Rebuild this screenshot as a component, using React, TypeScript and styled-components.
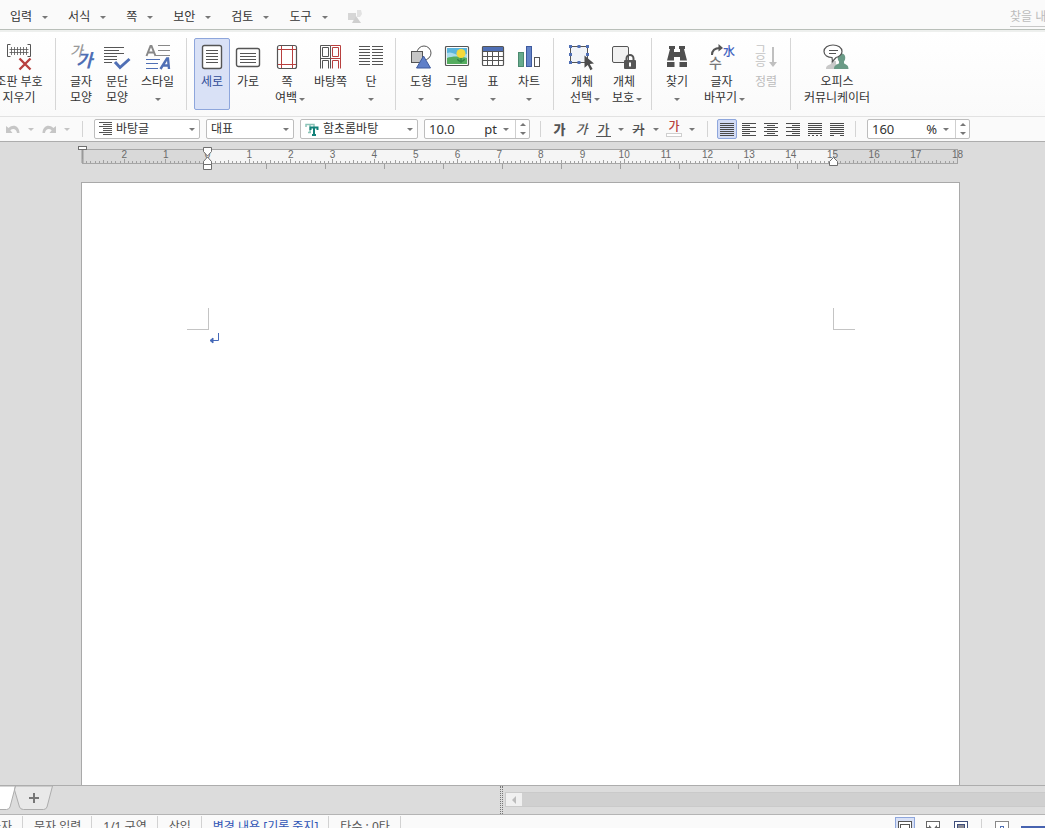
import React from 'react';
import styled, { createGlobalStyle, css } from 'styled-components';

const INK = '#555555';
const BLUE = '#4f6fb5';
const RED = '#b8403f';

const GlobalStyle = createGlobalStyle`
  *, *::before, *::after { box-sizing: border-box; }
  body {
    margin: 0;
    overflow: hidden;
    font-family: 'Noto Sans', 'Noto Sans CJK KR', sans-serif;
    font-size: 12px;
    line-height: 16px;
    color: #333;
  }
  button, input, select {
    margin: 0;
    padding: 0;
    border: 0;
    background: none;
    font: inherit;
    color: inherit;
    border-radius: 0;
  }
  svg { display: block; flex: none; overflow: visible; }
`;

const Shell = styled.div`
  display: flex;
  flex-direction: column;
  height: 100vh;
  overflow: hidden;
  background: #fafafa;
`;

/* ---------- menu bar ---------- */

const MenuBar = styled.nav`
  display: flex;
  align-items: center;
  gap: 20px;
  height: 30px;
  flex: none;
  padding: 5px 0 0 10px;
  border-bottom: 1px solid #b9bfb9;
`;

const MenuButton = styled.button`
  display: flex;
  align-items: center;
  gap: 10px;
  white-space: nowrap;
`;

const Caret = styled.span<{ $light?: boolean; $up?: boolean }>`
  width: 0;
  height: 0;
  flex: none;
  border: 3px solid transparent;
  ${p => (p.$up
    ? css`border-top: 0; border-bottom-color: #777;`
    : css`border-bottom: 0; border-top-color: ${p.$light ? '#c4c4c4' : '#777'};`)}
`;

const MenuSearch = styled.input`
  width: 35px;
  height: 20px;
  margin-left: auto;
  border-bottom: 1px solid #c8c8c8;
  &::placeholder { color: #bcbcbc; opacity: 1; }
`;

/* ---------- ribbon ---------- */

const Ribbon = styled.div`
  display: flex;
  flex: none;
  height: 87px;
  padding: 6px 0;
  margin-left: -18px;
  border-top: 2px solid #eef0ee;
  border-bottom: 1px solid #e2e2e2;
  background: linear-gradient(#ffffff, #fafafa);
`;

const RibbonGroup = styled.div`
  display: flex;
  flex: none;
  padding: 0 6px 0 7px;
  height: 72px;
  border-right: 1px solid #d6d6d6;
  &:last-child { border-right: 0; }
`;

const RibbonButton = styled.button<{ $width: number; $active?: boolean; $disabled?: boolean }>`
  display: flex;
  flex-direction: column;
  align-items: center;
  gap: 4px;
  flex: none;
  width: ${p => p.$width}px;
  padding-top: 5px;
  border: 1px solid ${p => (p.$active ? '#8ea6dc' : 'transparent')};
  border-radius: 2px;
  background: ${p => (p.$active ? '#d9e1f6' : 'transparent')};
  color: ${p => (p.$active ? '#2f4b96' : p.$disabled ? '#bdbdbd' : '#333')};
`;

const RibbonLabel = styled.span`
  display: flex;
  flex-direction: column;
  align-items: center;
  white-space: nowrap;
`;

const LabelRow = styled.span<{ $drop?: boolean }>`
  display: flex;
  align-items: center;
  height: 16px;
  gap: 2px;
  ${p => p.$drop && css`padding-left: 6px;`}
  ${Caret} { margin-top: 2px; }
`;

/* ---------- format bar ---------- */

const FormatBar = styled.div`
  display: flex;
  align-items: center;
  flex: none;
  gap: 6px;
  height: 25px;
  padding-left: 6px;
  background: #fafafa;
  border-bottom: 1px solid #adadad;
`;

const ToolSet = styled.div<{ $gap: number; $left: number; $right: number }>`
  display: flex;
  align-items: center;
  gap: ${p => p.$gap}px;
  padding: 0 ${p => p.$right}px 0 ${p => p.$left}px;
`;

const Rule = styled.span`
  width: 1px;
  height: 16px;
  flex: none;
  background: #d4d4d4;
`;

const Field = styled.label<{ $width: number }>`
  display: flex;
  align-items: center;
  flex: none;
  width: ${p => p.$width}px;
  height: 20px;
  padding: 0 4px;
  gap: 4px;
  border: 1px solid #bdbdbd;
  border-radius: 2px;
  background: #fff;
`;

const Select = styled.select`
  appearance: none;
  flex: 1;
  min-width: 0;
  height: 18px;
  outline: none;
`;

const NumberField = styled.div<{ $width: number }>`
  display: flex;
  align-items: center;
  flex: none;
  width: ${p => p.$width}px;
  height: 20px;
  padding-left: 4px;
  border: 1px solid #bdbdbd;
  border-radius: 2px;
  background: #fff;
  font-size: 13px;
`;

const NumberInput = styled.input`
  flex: 1;
  min-width: 0;
  width: 20px;
  height: 18px;
`;

const DropButton = styled.button`
  display: flex;
  align-items: center;
  justify-content: center;
  width: 18px;
  height: 18px;
`;

const Stepper = styled.span`
  display: flex;
  flex-direction: column;
  width: 14px;
  height: 18px;
  border-left: 1px solid #cfcfcf;
`;

const StepButton = styled.button`
  display: flex;
  flex: 1;
  align-items: center;
  justify-content: center;
`;

const CharButton = styled.button<{ $variant: 'bold' | 'italic' | 'underline' | 'strike' }>`
  width: 15px;
  height: 16px;
  color: ${INK};
  font-size: 13px;
  line-height: 14px;
  text-align: center;
  font-weight: 500;
  ${p => p.$variant === 'bold' && css`font-weight: 900;`}
  ${p => p.$variant === 'italic' && css`font-style: italic;`}
  ${p => p.$variant === 'underline' && css`border-bottom: 1px solid ${INK};`}
  ${p => p.$variant === 'strike' && css`text-decoration: line-through;`}
`;

const ColorButton = styled.button`
  display: flex;
  flex-direction: column;
  align-items: center;
  width: 16px;
  color: ${RED};
  font-size: 12px;
  line-height: 12px;
  font-weight: 500;
`;

const Swatch = styled.span`
  width: 16px;
  height: 4px;
  border: 1px solid #cfcfcf;
  background: #fff;
`;

const AlignButton = styled.button<{ $active?: boolean }>`
  display: flex;
  align-items: center;
  justify-content: center;
  width: 20px;
  height: 20px;
  border: 1px solid ${p => (p.$active ? '#8ea6dc' : 'transparent')};
  border-radius: 2px;
  background: ${p => (p.$active ? '#d3dcf5' : 'transparent')};
`;

const IconButton = styled.button`
  display: flex;
  align-items: center;
  justify-content: center;
`;

/* ---------- workspace ---------- */

const Workspace = styled.main`
  display: flex;
  flex-direction: column;
  flex: 1;
  min-height: 0;
  overflow: hidden;
  padding-left: 78px;
  background: #dcdcdc;
`;

const RulerRow = styled.div`
  flex: none;
  height: 40px;
`;

const Paper = styled.section`
  flex: 1;
  width: 879px;
  margin-left: 3px;
  padding: 125px 104px 0 105px;
  border: 1px solid #a9a9a9;
  border-bottom: 0;
  background: #fff;
`;

const MarginMarks = styled.div`
  display: flex;
  justify-content: space-between;
`;

const Mark = styled.span<{ $side: 'left' | 'right' }>`
  width: 22px;
  height: 22px;
  border-bottom: 1px solid #c4c4c4;
  ${p => (p.$side === 'left' ? 'border-right' : 'border-left')}: 1px solid #c4c4c4;
`;

const Paragraph = styled.p`
  margin: 0;
  padding: 3px 22px 0;
`;

/* ---------- bottom ---------- */

const TabStrip = styled.div`
  display: flex;
  align-items: flex-start;
  flex: none;
  height: 30px;
  border-top: 1px solid #adadad;
  border-bottom: 1px solid #b4b4b4;
  background: #dcdcdc;
`;

const TabArea = styled.div`
  flex: 0 0 500px;
  display: flex;
`;

const Splitter = styled.span`
  width: 3px;
  height: 28px;
  margin-right: 2px;
  flex: none;
  border-left: 1px dotted #777;
  border-right: 1px dotted #777;
`;

const ScrollTrack = styled.div`
  display: flex;
  flex: 1;
  height: 15px;
  margin-top: 6px;
  border: 1px solid #cacaca;
  border-right: 0;
  background: #d0d0d0;
`;

const ScrollButton = styled.button`
  display: flex;
  align-items: center;
  justify-content: center;
  width: 16px;
  height: 13px;
  background: #f0f0f0;
`;

const StatusBar = styled.footer`
  display: flex;
  align-items: flex-start;
  flex: none;
  height: 13px;
  overflow: hidden;
  background: #fafafa;
`;

const StatusItem = styled.span<{ $accent?: boolean }>`
  flex: none;
  margin-top: 1px;
  padding: 2px 10px 0 11px;
  line-height: 18px;
  border-right: 1px solid #d2d2d2;
  white-space: nowrap;
  color: ${p => (p.$accent ? '#2f55b5' : '#555')};
`;

const StatusEdge = styled(StatusItem)`
  display: flex;
  justify-content: flex-end;
  width: 23px;
  padding-left: 0;
`;

const ViewTools = styled.div`
  display: flex;
  align-items: flex-start;
  margin-left: auto;
  padding-top: 2px;
`;

const ViewButton = styled.button<{ $active?: boolean }>`
  display: flex;
  justify-content: center;
  width: 20px;
  height: 22px;
  margin-right: 8px;
  padding-top: 3px;
  border: 1px solid ${p => (p.$active ? '#8ea6dc' : 'transparent')};
  background: ${p => (p.$active ? '#d9e1f6' : 'transparent')};
`;

const ViewRule = styled.span`
  width: 1px;
  height: 18px;
  margin: 2px 10px 0 2px;
  background: #d2d2d2;
`;

const ZoomTrack = styled.span`
  width: 24px;
  height: 3px;
  margin: 9px 0 0 1px;
  background: #4763b0;
`;

/* ---------- icons ---------- */

const Icon = ({ children }: { children: React.ReactNode }) => (
  <svg width="26" height="26" viewBox="0 0 26 26" fill="none" stroke={INK} strokeWidth="1.2" aria-hidden="true">
    {children}
  </svg>
);

const glyphFont = { fontFamily: "'Noto Sans CJK KR', sans-serif" };
const rows = (ys: number[], x1: number, x2: number) => ys.map(y => `M${x1} ${y}H${x2}`).join('');

const icons: Record<string, React.ReactNode> = {
  clearMarks: (
    <Icon>
      <path d="M4.500 .5h-3v12h3M21.500 .5h3v12h-3" strokeWidth="1" />
      <path d="M3.500 5.500h19M3.500 8.500h19M5.500 3v8M8.500 3v8M11.500 3v8M14.500 3v8M17.500 3v8M20.500 3v8" strokeWidth=".8" />
      <path d="M13.500 14.500l11 11M24.500 14.500l-11 11" stroke={RED} strokeWidth="2.400" />
    </Icon>
  ),
  charShape: (
    <Icon>
      <text x="2" y="12" fontSize="14" fill="#999" stroke="none" fontStyle="italic" fontWeight="500" style={glyphFont}>가</text>
      <text x="8" y="23" fontSize="18" fill={BLUE} stroke="none" fontStyle="italic" fontWeight="700" style={glyphFont}>가</text>
    </Icon>
  ),
  paraShape: (
    <Icon>
      <path d="M0 3.500h20M0 6.500h15M0 9.500h20M0 12.500h13M0 15.500h13M0 18.500h8" strokeWidth="1" />
      <path d="M11 18l5 5.500L25.500 15" stroke={BLUE} strokeWidth="3" />
    </Icon>
  ),
  style: (
    <Icon>
      <path d="M1.500 12L5.500 2h1l4 10M3 8.500h6" stroke="#888" strokeWidth="2" />
      <path d="M13 1.500h12M13 6.500h12M11 11.500h14" stroke="#888" strokeWidth="1" />
      <path d="M1 15.500h14M1 19.500h12M1 24.500h12" stroke={BLUE} strokeWidth="1" />
      <path d="M15.500 25L22 14.500h1l1 10.500M18 21.500h6" stroke={BLUE} strokeWidth="2.400" />
    </Icon>
  ),
  portrait: (
    <Icon>
      <rect x="3.500" y="1.500" width="19" height="23" rx="2" fill="#fff" strokeWidth="1.400" />
      <path d={rows([6.5, 9.5, 12.5, 15.5, 18.5], 7, 19)} strokeWidth="1" />
    </Icon>
  ),
  landscape: (
    <Icon>
      <rect x="1.500" y="4.500" width="23" height="18" rx="2" fill="#fff" strokeWidth="1.400" />
      <path d={rows([9.5, 12.5, 15.5, 18.5], 5, 21)} strokeWidth="1" />
    </Icon>
  ),
  margins: (
    <Icon>
      <rect x="3.500" y="1.500" width="19" height="23" rx="2" fill="#fff" />
      <path d="M7.500 2v22M18.500 2v22M4 5.500h18M4 20.500h18" stroke={RED} strokeWidth="1" />
    </Icon>
  ),
  master: (
    <Icon>
      <path d="M2.500 24.500v-23h10v23M4.500 3.500h6v9h-6zM2.500 14.500h10M4.500 24.500v-8h6v8" strokeWidth="1" />
      <path d="M12.500 1.500h10v23M14.500 3.500h6v9h-6zM12.500 14.500h10M14.500 24.500v-8h6v8" stroke={RED} strokeWidth="1" />
    </Icon>
  ),
  columns: (
    <Icon>
      <path
        d={rows([2.5, 5.5, 8.5, 11.5, 14.5, 17.5, 20.5], 1, 12) + rows([2.5, 5.5, 8.5, 11.5, 14.5, 17.5, 20.5], 14, 25)}
        strokeWidth="1"
      />
    </Icon>
  ),
  shapes: (
    <Icon>
      <circle cx="16" cy="9" r="7" fill="#fff" strokeWidth="1" />
      <rect x="3.500" y="7.500" width="11" height="11" fill="#c6c6c6" strokeWidth="1" />
      <path d="M15.500 12l7 12h-14z" fill="#5f7fc8" stroke="#3e5a9e" strokeWidth="1" />
    </Icon>
  ),
  picture: (
    <Icon>
      <rect x="1.500" y="2.500" width="23" height="19" rx="1" fill="#fff" />
      <rect x="3" y="4" width="20" height="9" fill="#5ab4dc" stroke="none" />
      <path d="M3 9c5-2 8 2 12 2s6-1 8-1v6H3z" fill="#a8dcec" stroke="none" />
      <path d="M3 14c5-2 13-2 20 0v6H3z" fill="#55ad60" stroke="none" />
      <path d="M17 13v6M13.500 15c1 3 6 3 7 0" stroke="#2f8046" />
      <circle cx="17" cy="9.500" r="4.500" fill="#f5d93a" stroke="none" />
    </Icon>
  ),
  table: (
    <Icon>
      <rect x="2.500" y="2.500" width="21" height="19" rx="1" fill="#fff" />
      <rect x="3" y="3" width="20" height="4" fill={BLUE} stroke="none" />
      <path d="M2.500 7.500h21M2.500 12.500h21M2.500 16.500h21M7.500 7.500v14M12.500 7.500v14M18.500 7.500v14" strokeWidth="1" />
    </Icon>
  ),
  chart: (
    <Icon>
      <rect x="2.500" y="8.500" width="5" height="14" fill="#66ab8c" stroke="#4c8a70" strokeWidth="1" />
      <rect x="10.500" y="2.500" width="5" height="20" fill="#6484c8" stroke="#3e5a9e" strokeWidth="1" />
      <rect x="18.500" y="13.500" width="5" height="9" fill="#fff" strokeWidth="1" />
    </Icon>
  ),
  select: (
    <Icon>
      <rect x="1.500" y="2.500" width="17" height="16" fill="#f1f4f8" strokeWidth="1" />
      <path d="M0 1h3v3H0zM8.500 1h3v3h-3zM17 1h3v3h-3zM0 9h3v3H0zM17 9h3v3h-3zM0 17h3v3H0zM8.500 17h3v3h-3z" fill={BLUE} stroke="none" />
      <path d="M15.500 11.500l9.500 8-4.200.6 2.800 5-2.200 1.100-2.600-5.100-3.300 2.700z" fill="#4c4c4c" stroke="none" />
    </Icon>
  ),
  protect: (
    <Icon>
      <rect x="1.500" y="2.500" width="16" height="16" rx="1.500" fill="#f1f1f1" strokeWidth="1" />
      <path d="M15.500 17v-2.500a3.500 3.500 0 017 0V17" stroke="#555" strokeWidth="2" />
      <rect x="13" y="16" width="12" height="9" rx="1" fill="#555" stroke="none" />
      <path d="M19 18.500v4" stroke="#fff" strokeWidth="2" />
    </Icon>
  ),
  find: (
    <Icon>
      <path d="M5 2h6v3h-1v3h6V5h-1V2h6v3h-1l3 11.500h-7V13h-6v3.500H3L6 5H5z" fill="#4f4f4f" stroke="none" />
      <path d="M3 18h7.500v5H3zM15.500 18H23v5h-7.500z" fill="#4f4f4f" stroke="none" />
    </Icon>
  ),
  convert: (
    <Icon>
      <path d="M3 11c0-5 3-7 8-7" strokeWidth="2" />
      <path d="M9.500 0L14 4l-4.500 3.500z" fill={INK} stroke="none" />
      <text x="14" y="12" fontSize="12" fill="#4263c0" stroke="none" fontWeight="500" style={glyphFont}>水</text>
      <text x="0" y="24" fontSize="14" fill="#777" stroke="none" fontWeight="500" style={glyphFont}>수</text>
    </Icon>
  ),
  sort: (
    <Icon>
      <text x="2" y="11" fontSize="12" fill="#c4c4c4" stroke="none" style={glyphFont}>그</text>
      <text x="2" y="22" fontSize="12" fill="#c4c4c4" stroke="none" style={glyphFont}>응</text>
      <path d="M20 3v16" stroke="#c0c0c0" strokeWidth="2" />
      <path d="M16 18h8l-4 5z" fill="#c0c0c0" stroke="none" />
    </Icon>
  ),
  communicator: (
    <Icon>
      <path d="M2 25c0-4 3-4 5-5v-3h5v3c2 1 5 1 5 5z" fill="#c9c9c9" stroke="none" />
      <path d="M10 25c0-4 3-4.500 5-5.500v-2c-2-2-2-8 2.500-8s4.500 6 2.500 8v2c2 1 4.500 1.500 4.500 5.500z" fill="#6a9a86" stroke="none" />
      <path d="M9 1c5 0 9 2.500 9 6.500 0 3-3 5.500-6 6l-3.500 4-.5-4C4 13.500 0 11.500 0 7.500S4 1 9 1z" fill="#fff" />
      <path d="M5 6.500h9M5 9.500h7" strokeWidth="1" />
    </Icon>
  ),
};

type AlignKind = 'justify' | 'left' | 'center' | 'right' | 'distribute' | 'divide';
const alignPaths: Record<AlignKind, string> = {
  justify: rows([1.5, 3.5, 5.5, 7.5, 9.5, 11.5, 13.5], 0, 14),
  left: rows([1.5, 5.5, 9.5, 13.5], 0, 14) + rows([3.5, 7.5, 11.5], 0, 8),
  center: rows([1.5, 5.5, 9.5, 13.5], 0, 14) + rows([3.5, 7.5, 11.5], 3, 11),
  right: rows([1.5, 5.5, 9.5, 13.5], 0, 14) + rows([3.5, 7.5, 11.5], 6, 14),
  distribute: rows([1.5, 3.5, 5.5, 7.5, 9.5, 11.5], 0, 14) + 'M0 13.500h2M4 13.500h2M8 13.500h2M12 13.500h2',
  divide: rows([1.5, 3.5, 5.5, 7.5, 9.5, 11.5], 0, 14) + 'M0 13.500h4M10 13.500h4',
};

const AlignIcon = ({ kind }: { kind: AlignKind }) => (
  <svg width="14" height="15" viewBox="0 0 14 15" stroke="#4a4a4a" strokeWidth="1" aria-hidden="true">
    <path d={alignPaths[kind]} />
  </svg>
);

const UndoIcon = ({ flip }: { flip?: boolean }) => (
  <svg width="14" height="10" viewBox="0 0 14 10" aria-hidden="true">
    <path
      transform={flip ? 'matrix(-1 0 0 1 14 0)' : undefined}
      d="M0 2v7h6.500L4.300 6.300C7 3.800 10.500 5 11 9h2.500C13.500 2 7 -.5 2.600 4z"
      fill="#c6c6c6"
    />
  </svg>
);

const ParagraphStyleIcon = () => (
  <svg width="13" height="14" viewBox="0 0 13 14" stroke="#555" aria-hidden="true">
    <path d="M0 .5h13M4 2.500h9M0 4.500h13M4 6.500h9M4 8.500h9M0 10.500h13M4 12.500h9" />
  </svg>
);

const FontIcon = () => (
  <svg width="14" height="13" viewBox="0 0 14 13" fill="none" aria-hidden="true">
    <path d="M1 4V1.500h8V4M5 1.500v8M3 9.500h3" stroke="#8cc4b8" strokeWidth="1.500" />
    <path d="M5.500 7V4.500h7V7M9 4v8M7 12h4" stroke="#14827a" strokeWidth="2" />
  </svg>
);

/* ---------- ruler ---------- */

const CM = 125 / 3;
const ORIGIN = 129.5;

const Ruler = () => {
  const ticks: string[] = [];
  for (let i = -30; i <= 180; i++) {
    const x = Math.round(ORIGIN + (i * CM) / 10 - 0.5) + 0.5;
    const size = i % 10 === 0 ? 4 : i % 5 === 0 ? 3 : 2;
    ticks.push(`M${x} 21v-${size}`);
  }
  const stops: string[] = [];
  for (let i = 1; i <= 10; i++) {
    stops.push(`M${Math.round(ORIGIN + i * 58.9) + 0.5} 22v5`);
  }
  const numbers = [-2, -1, ...Array.from({ length: 19 }, (_, i) => i)];
  return (
    <svg width="890" height="32" viewBox="0 0 890 32" aria-label="눈금자">
      <rect x="4" y="7" width="876" height="15" fill="#d9d9d9" />
      <rect x="130" y="7" width="625" height="15" fill="#f5f5f5" />
      <path d="M4 7.500h876M4 21.500h876M879.500 7v15" stroke="#a6a6a6" />
      <path d="M4.500 7v14" stroke="#999" strokeWidth="2" />
      <path d={ticks.join('') + stops.join('')} stroke="#a0a0a0" />
      {numbers.map(n => (
        <text
          key={n}
          x={ORIGIN + n * CM}
          y="16"
          fontSize="10"
          textAnchor="middle"
          fill="#6a6a6a"
          fontFamily="'Liberation Sans', sans-serif"
        >
          {Math.abs(n)}
        </text>
      ))}
      <g fill="#fff" stroke="#6f6f6f">
        <rect x=".5" y="4.500" width="8" height="3" />
        <path d="M125.500 5.500h8v4l-4 4.500-4-4.500zM125.500 22.500v-3l4-4.500 4 4.500v3zM125.500 22.500h8v5h-8z" />
        <path d="M751.500 23.500v-4l4-4 4 4v4z" />
      </g>
    </svg>
  );
};

/* ---------- data ---------- */

type Tool = {
  icon: string;
  lines: string[];
  width: number;
  caret?: 'inline' | 'below';
  active?: boolean;
  disabled?: boolean;
};

const menus = ['입력', '서식', '쪽', '보안', '검토', '도구'];

const groups: Tool[][] = [
  [{ icon: 'clearMarks', lines: ['조판 부호', '지우기'], width: 60 }],
  [
    { icon: 'charShape', lines: ['글자', '모양'], width: 36 },
    { icon: 'paraShape', lines: ['문단', '모양'], width: 36 },
    { icon: 'style', lines: ['스타일'], width: 45, caret: 'below' },
  ],
  [
    { icon: 'portrait', lines: ['세로'], width: 36, active: true },
    { icon: 'landscape', lines: ['가로'], width: 36 },
    { icon: 'margins', lines: ['쪽', '여백'], width: 42, caret: 'inline' },
    { icon: 'master', lines: ['바탕쪽'], width: 45 },
    { icon: 'columns', lines: ['단'], width: 36, caret: 'below' },
  ],
  [
    { icon: 'shapes', lines: ['도형'], width: 36, caret: 'below' },
    { icon: 'picture', lines: ['그림'], width: 36, caret: 'below' },
    { icon: 'table', lines: ['표'], width: 36, caret: 'below' },
    { icon: 'chart', lines: ['차트'], width: 36, caret: 'below' },
  ],
  [
    { icon: 'select', lines: ['개체', '선택'], width: 42, caret: 'inline' },
    { icon: 'protect', lines: ['개체', '보호'], width: 42, caret: 'inline' },
  ],
  [
    { icon: 'find', lines: ['찾기'], width: 36, caret: 'below' },
    { icon: 'convert', lines: ['글자', '바꾸기'], width: 53, caret: 'inline' },
    { icon: 'sort', lines: ['정렬'], width: 36, disabled: true },
  ],
  [{ icon: 'communicator', lines: ['오피스', '커뮤니케이터'], width: 78 }],
];

const aligns: [AlignKind, string][] = [
  ['justify', '양쪽 정렬'],
  ['left', '왼쪽 정렬'],
  ['center', '가운데 정렬'],
  ['right', '오른쪽 정렬'],
  ['distribute', '배분 정렬'],
  ['divide', '나눔 정렬'],
];

const Combo = ({ label, value, width, icon }: { label: string; value: string; width: number; icon?: React.ReactNode }) => (
  <Field $width={width}>
    {icon}
    <Select aria-label={label} defaultValue={value}>
      <option>{value}</option>
    </Select>
    <Caret />
  </Field>
);

const Amount = ({ label, value, unit, width }: { label: string; value: string; unit: string; width: number }) => (
  <NumberField $width={width}>
    <NumberInput aria-label={label} defaultValue={value} />
    <span>{unit}</span>
    <DropButton aria-label={`${label} 목록`}><Caret /></DropButton>
    <Stepper>
      <StepButton aria-label={`${label} 늘리기`}><Caret $up /></StepButton>
      <StepButton aria-label={`${label} 줄이기`}><Caret /></StepButton>
    </Stepper>
  </NumberField>
);

export default function App() {
  return (
    <Shell>
      <GlobalStyle />
      <MenuBar>
        {menus.map(name => (
          <MenuButton key={name}>{name}<Caret /></MenuButton>
        ))}
        <IconButton aria-label="도형 도구">
          <svg width="14" height="14" viewBox="0 0 14 14" aria-hidden="true">
            <rect x="0" y="3" width="8" height="7" fill="#d6d6d6" />
            <path d="M9 0h4l1 4-2 3H9z" fill="#e2e2e2" />
            <path d="M8 6l5 7H4z" fill="#cfcfcf" />
          </svg>
        </IconButton>
        <MenuSearch aria-label="찾기" placeholder="찾을 내용" />
      </MenuBar>

      <Ribbon>
        {groups.map((tools, index) => (
          <RibbonGroup key={index}>
            {tools.map(tool => (
              <RibbonButton
                key={tool.icon}
                $width={tool.width}
                $active={tool.active}
                $disabled={tool.disabled}
                disabled={tool.disabled}
              >
                {icons[tool.icon]}
                <RibbonLabel>
                  {tool.lines.map((line, i) => {
                    const drop = tool.caret === 'inline' && i === tool.lines.length - 1;
                    return (
                      <LabelRow key={line} $drop={drop}>
                        {line}
                        {drop && <Caret />}
                      </LabelRow>
                    );
                  })}
                  {tool.caret === 'below' && <LabelRow><Caret /></LabelRow>}
                </RibbonLabel>
              </RibbonButton>
            ))}
          </RibbonGroup>
        ))}
      </Ribbon>

      <FormatBar>
        <ToolSet $gap={8} $left={0} $right={6}>
          <IconButton aria-label="되돌리기"><UndoIcon /></IconButton>
          <IconButton aria-label="되돌리기 목록"><Caret $light /></IconButton>
          <IconButton aria-label="다시 실행"><UndoIcon flip /></IconButton>
          <IconButton aria-label="다시 실행 목록"><Caret $light /></IconButton>
        </ToolSet>
        <Rule />
        <ToolSet $gap={6} $left={5} $right={4}>
          <Combo label="스타일" value="바탕글" width={106} icon={<ParagraphStyleIcon />} />
          <Combo label="언어" value="대표" width={88} />
          <Combo label="글꼴" value="함초롬바탕" width={118} icon={<FontIcon />} />
          <Amount label="글자 크기" value="10.0" unit="pt" width={106} />
        </ToolSet>
        <Rule />
        <ToolSet $gap={7} $left={5} $right={6}>
          <CharButton $variant="bold" aria-label="진하게">가</CharButton>
          <CharButton $variant="italic" aria-label="기울임">가</CharButton>
          <CharButton $variant="underline" aria-label="밑줄">가</CharButton>
          <IconButton aria-label="밑줄 목록"><Caret /></IconButton>
          <CharButton $variant="strike" aria-label="취소선">가</CharButton>
          <IconButton aria-label="취소선 목록"><Caret /></IconButton>
          <ColorButton aria-label="글자 색">가<Swatch /></ColorButton>
          <IconButton aria-label="글자 색 목록"><Caret /></IconButton>
        </ToolSet>
        <Rule />
        <ToolSet $gap={2} $left={3} $right={2}>
          {aligns.map(([kind, label], i) => (
            <AlignButton key={kind} $active={i === 0} aria-label={label}>
              <AlignIcon kind={kind} />
            </AlignButton>
          ))}
        </ToolSet>
        <Rule />
        <ToolSet $gap={0} $left={5} $right={0}>
          <Amount label="줄 간격" value="160" unit="%" width={103} />
        </ToolSet>
      </FormatBar>

      <Workspace>
        <RulerRow><Ruler /></RulerRow>
        <Paper>
          <MarginMarks>
            <Mark $side="left" />
            <Mark $side="right" />
          </MarginMarks>
          <Paragraph>
            <svg width="11" height="11" viewBox="0 0 11 11" fill="none" stroke="#4468b8" aria-hidden="true">
              <path d="M9.500 0v7.500H3" />
              <path d="M1 7.500L4 5v5z" fill="#4468b8" />
            </svg>
          </Paragraph>
        </Paper>
      </Workspace>

      <TabStrip>
        <TabArea>
          <IconButton aria-label="새 탭">
            <svg width="54" height="26" viewBox="0 0 54 26" aria-hidden="true">
              <path d="M-1 0H15.500L10 21q-1 2.500-3.500 2.500H-1z" fill="#fff" stroke="#adadad" />
              <path d="M15.500 0h37L47 21q-1 2.500-3.500 2.500h-20Q20.500 23.500 19.500 21L14.500 4z" fill="#e9e9e9" stroke="#adadad" />
              <path d="M29 12h10M34 7v10" stroke="#777" strokeWidth="2" />
            </svg>
          </IconButton>
        </TabArea>
        <Splitter />
        <ScrollTrack>
          <ScrollButton aria-label="왼쪽으로">
            <svg width="5" height="8" viewBox="0 0 5 8" aria-hidden="true"><path d="M4 0v8L0 4z" fill="#bcbcbc" /></svg>
          </ScrollButton>
        </ScrollTrack>
      </TabStrip>

      <StatusBar>
        <StatusEdge>글자</StatusEdge>
        <StatusItem>문자 입력</StatusItem>
        <StatusItem>1/1 구역</StatusItem>
        <StatusItem>삽입</StatusItem>
        <StatusItem $accent>변경 내용 [기록 중지]</StatusItem>
        <StatusItem>타수 : 0타</StatusItem>
        <ViewTools>
          <ViewButton $active aria-label="쪽 윤곽">
            <svg width="14" height="14" viewBox="0 0 14 14" fill="#fff" stroke="#555" aria-hidden="true">
              <rect x=".5" y=".5" width="13" height="12" /><rect x="2.500" y="3.500" width="9" height="9" />
            </svg>
          </ViewButton>
          <ViewButton aria-label="폭 맞춤">
            <svg width="14" height="14" viewBox="0 0 14 14" fill="#fff" stroke="#666" aria-hidden="true">
              <rect x=".5" y=".5" width="13" height="12" /><path d="M1 6.500h3M13 6.500h-3" /><path d="M3 4l2.500 2.500L3 9zM11 4L8.500 6.500 11 9z" fill="#666" stroke="none" />
            </svg>
          </ViewButton>
          <ViewButton aria-label="쪽 맞춤">
            <svg width="14" height="14" viewBox="0 0 14 14" fill="#fff" stroke="#3f4f7c" aria-hidden="true">
              <rect x=".5" y=".5" width="13" height="12" /><rect x="3.500" y="3.500" width="7" height="9" fill="#8a8a94" />
            </svg>
          </ViewButton>
          <ViewRule />
          <ViewButton aria-label="확대/축소">
            <svg width="14" height="14" viewBox="0 0 14 14" fill="#fff" stroke="#888" aria-hidden="true">
              <rect x=".5" y=".5" width="13" height="12" /><rect x="5.500" y="5.500" width="3" height="7" stroke={BLUE} />
            </svg>
          </ViewButton>
          <ZoomTrack />
        </ViewTools>
      </StatusBar>
    </Shell>
  );
}
